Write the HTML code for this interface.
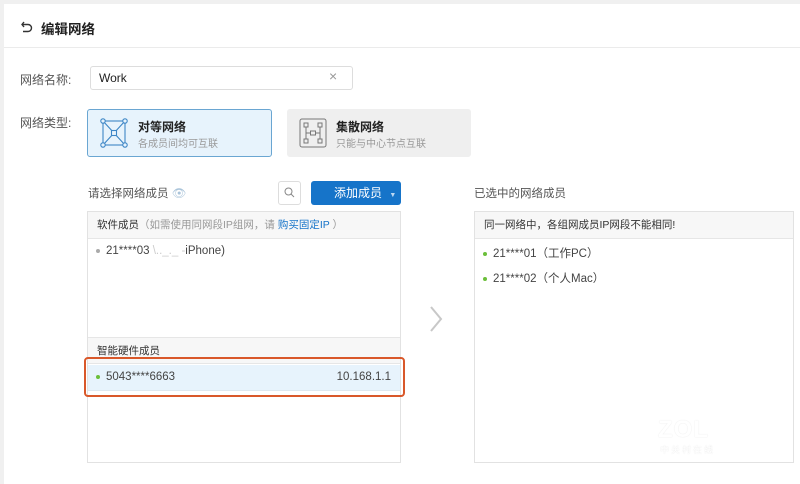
<!DOCTYPE html>
<html><head><meta charset="utf-8"><style>
*{box-sizing:border-box;margin:0;padding:0}
body{width:800px;height:474px;background:#f0f0f0;font-family:"Liberation Sans","Noto Sans CJK SC",sans-serif;position:relative;overflow:hidden;color:#333}
.card{position:absolute;left:4px;top:4px;width:800px;height:480px;background:#fff}
.a{position:absolute}
.lbl{font-size:12px;color:#555}
.panel{position:absolute;border:1px solid #e2e2e2;background:#fff}
.ph{position:absolute;left:0;right:0;height:27px;background:#f7f7f7;border-bottom:1px solid #e6e6e6;font-size:10.5px;line-height:27px;padding-left:9px;color:#333}
.dot{display:inline-block;width:4px;height:4px;border-radius:2px;margin-right:6px;vertical-align:middle}
.it{font-size:11.5px;color:#444}
</style></head><body>
<div class="card"></div>
<svg class="a" style="left:20px;top:20px" width="14" height="14" viewBox="0 0 14 14" fill="none" stroke="#333" stroke-width="1.4"><path d="M4 2 L2 4.5 L4 7"/><path d="M2.5 4.5 H8 a3.5 3.5 0 0 1 0 7 H3"/></svg>
<div class="a" style="left:41px;top:18px;font-size:13.5px;font-weight:bold;color:#222">编辑网络</div>
<div class="a" style="left:4px;top:47px;width:796px;height:1px;background:#ebebeb"></div>
<div class="a lbl" style="left:20px;top:71px">网络名称:</div>
<div class="a" style="left:90px;top:66px;width:263px;height:24px;border:1px solid #ddd;border-radius:3px;font-size:12px;line-height:22px;padding-left:8px;color:#222">Work</div>
<div class="a" style="left:329px;top:68px;font-size:14px;color:#999">×</div>
<div class="a lbl" style="left:20px;top:114px">网络类型:</div>
<div class="a" style="left:87px;top:109px;width:185px;height:48px;background:#e7f3fc;border:1px solid #6aa6d2;border-radius:3px"></div>
<svg class="a" style="left:100px;top:118px" width="28" height="30" viewBox="0 0 28 30" fill="none" stroke="#3d86c6" stroke-width="1.1"><rect x="3" y="3" width="22" height="24"/><path d="M3 3 L25 27 M25 3 L3 27"/><circle cx="3" cy="3" r="2.2" fill="#e7f3fc"/><circle cx="25" cy="3" r="2.2" fill="#e7f3fc"/><circle cx="3" cy="27" r="2.2" fill="#e7f3fc"/><circle cx="25" cy="27" r="2.2" fill="#e7f3fc"/><rect x="11.5" y="12.5" width="5" height="5" fill="#e7f3fc"/></svg>
<div class="a" style="left:138px;top:118px;font-size:12px;font-weight:bold;color:#222">对等网络</div>
<div class="a" style="left:138px;top:135px;font-size:10px;color:#999">各成员间均可互联</div>
<div class="a" style="left:287px;top:109px;width:184px;height:48px;background:#efefef;border-radius:3px"></div>
<svg class="a" style="left:299px;top:118px" width="28" height="30" viewBox="0 0 28 30" fill="none" stroke="#777" stroke-width="1"><rect x="1" y="1" width="26" height="28" rx="2"/><rect x="5" y="5" width="4" height="4"/><rect x="19" y="5" width="4" height="4"/><rect x="5" y="21" width="4" height="4"/><rect x="19" y="21" width="4" height="4"/><rect x="11.5" y="13" width="5" height="4"/><path d="M7 9 V15 H11.5 M21 9 V15 H16.5 M7 21 V15 M21 21 V15"/></svg>
<div class="a" style="left:336px;top:118px;font-size:12px;font-weight:bold;color:#222">集散网络</div>
<div class="a" style="left:336px;top:135px;font-size:10px;color:#999">只能与中心节点互联</div>
<div class="a" style="left:88px;top:185px;font-size:11.5px;color:#555">请选择网络成员 <span style="color:#aac4da">👁</span></div>
<div class="a" style="left:278px;top:181px;width:23px;height:24px;border:1px solid #ddd;border-radius:3px"></div>
<svg class="a" style="left:284px;top:187px" width="11" height="11" viewBox="0 0 11 11" fill="none" stroke="#888" stroke-width="1"><circle cx="4.5" cy="4.5" r="3.5"/><path d="M7 7 L10 10"/></svg>
<div class="a" style="left:311px;top:181px;width:90px;height:24px;background:#1674c9;border-radius:3px;color:#fff;font-size:12px;line-height:24px;padding-left:23px">添加成员 <span style="font-size:7px;color:#bcd8f2;margin-left:4px">▼</span></div>
<div class="a" style="left:474px;top:185px;font-size:11.5px;color:#555">已选中的网络成员</div>
<div class="panel" style="left:87px;top:211px;width:314px;height:252px">
<div class="ph" style="top:0">软件成员<span style="color:#999">（如需使用同网段IP组网，请 </span><span style="color:#1674c9">购买固定IP</span><span style="color:#999"> ）</span></div>
<div class="a it" style="left:8px;top:33px"><span class="dot" style="background:#aaa"></span>21****03 <span style="color:#ccc">\.._._ -</span>iPhone)</div>
<div class="ph" style="top:125px;height:27px;border-top:1px solid #e6e6e6;line-height:27px">智能硬件成员</div>
<div class="a" style="left:0;right:0;top:153px;height:26px;background:#e7f3fc;border-bottom:1px solid #dde8f0"></div>
<div class="a it" style="left:8px;top:159px"><span class="dot" style="background:#6bbf3a"></span>5043****6663</div>
<div class="a it" style="right:9px;top:159px">10.168.1.1</div>
</div>
<div class="a" style="left:84px;top:357px;width:321px;height:40px;border:2px solid #d9582a;border-radius:4px"></div>
<svg class="a" style="left:428px;top:305px" width="16" height="28" viewBox="0 0 16 28" fill="none" stroke="#c8c8c8" stroke-width="2"><path d="M3 2 L13 14 L3 26"/></svg>
<div class="panel" style="left:474px;top:211px;width:320px;height:252px">
<div class="ph">同一网络中，各组网成员IP网段不能相同!</div>
<div class="a it" style="left:8px;top:33px"><span class="dot" style="background:#6bbf3a"></span>21****01（工作PC）</div>
<div class="a it" style="left:8px;top:58px"><span class="dot" style="background:#6bbf3a"></span>21****02（个人Mac）</div>
</div>
<div class="a" style="left:658px;top:416px;font-size:24px;font-weight:bold;color:#fff;text-shadow:0 0 1px #ddd;letter-spacing:1px">ZOL</div>
<div class="a" style="left:660px;top:443px;font-size:9px;color:#fff;text-shadow:0 0 1px #ddd;letter-spacing:2px">中关村在线</div>
</body></html>
